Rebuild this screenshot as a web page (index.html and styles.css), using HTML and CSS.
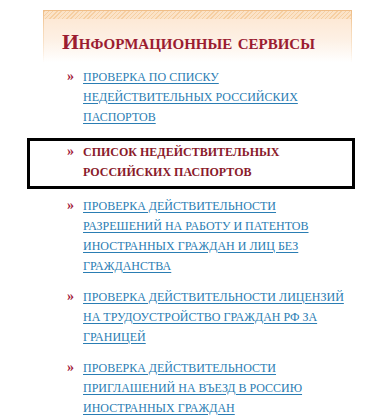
FILE: index.html
```html
<!DOCTYPE html>
<html lang="ru">
<head>
<meta charset="utf-8">
<title>Информационные сервисы</title>
<link rel="stylesheet" href="styles.css">
</head>
<body>
<div class="panel">
  <div class="header">
    <div class="hatch"></div>
    <h2 class="title">Информационные сервисы</h2>
  </div>
  <ul class="list">
    <li class="item"><span class="mark">»</span><a class="link" href="#">Проверка по списку недействительных российских паспортов</a></li>
    <li class="item item-active"><span class="mark">»</span><span class="current">Список недействительных российских паспортов</span></li>
    <li class="item"><span class="mark">»</span><a class="link" href="#">Проверка действительности разрешений на работу и патентов иностранных граждан и лиц без гражданства</a></li>
    <li class="item"><span class="mark">»</span><a class="link" href="#">Проверка действительности лицензий на трудоустройство граждан РФ за границей</a></li>
    <li class="item"><span class="mark">»</span><a class="link" href="#">Проверка действительности приглашений на въезд в Россию иностранных граждан</a></li>
  </ul>
</div>
</body>
</html>
```
FILE: styles.css
```css
html, body {
  margin: 0;
  padding: 0;
  background: #ffffff;
}
body {
  font-family: "Liberation Serif", "Times New Roman", serif;
  overflow: hidden;
}
.panel {
  margin: 10px 0 0 43px;
  width: 309px;
}
.header {
  height: 52px;
  border: 1px solid transparent;
  border-bottom: 0;
  border-image: linear-gradient(to bottom, #efbd86 0%, #f6d9b8 40%, rgba(255,255,255,0) 100%) 1;
  background: linear-gradient(to bottom, #fde6d0 0%, #fdf0e4 55%, #ffffff 100%);
  box-sizing: border-box;
}
.hatch {
  height: 8px;
  background: repeating-linear-gradient(135deg, #f6cfa2 0 1px, #fbe3c8 1px 3px);
}
.title {
  margin: 12px 0 0 18px;
  font-size: 21.7px;
  line-height: 22px;
  font-weight: bold;
  font-variant: small-caps;
  color: #9b1c31;
  white-space: nowrap;
}
.list {
  list-style: none;
  margin: 5px 0 0 0;
  padding: 0;
}
.item {
  display: flex;
  padding-left: 24px;
  margin-bottom: 11px;
  font-size: 12px;
  line-height: 20px;
  text-transform: uppercase;
}
.mark {
  flex: 0 0 16px;
  color: #a3203a;
  font-weight: bold;
  font-size: 14px;
}
.link, .current {
  width: 263px;
}
.link {
  color: #2a7db3;
  text-decoration: underline;
  text-underline-offset: 2px;
}
.item-active {
  margin-left: -16px;
  margin-right: -3px;
  padding: 1px 0 4px 37px;
  border: 3px solid #000000;
  margin-top: 7px;
  margin-bottom: 7px;
}
.current {
  color: #8a1a2a;
  font-weight: bold;
}
```
